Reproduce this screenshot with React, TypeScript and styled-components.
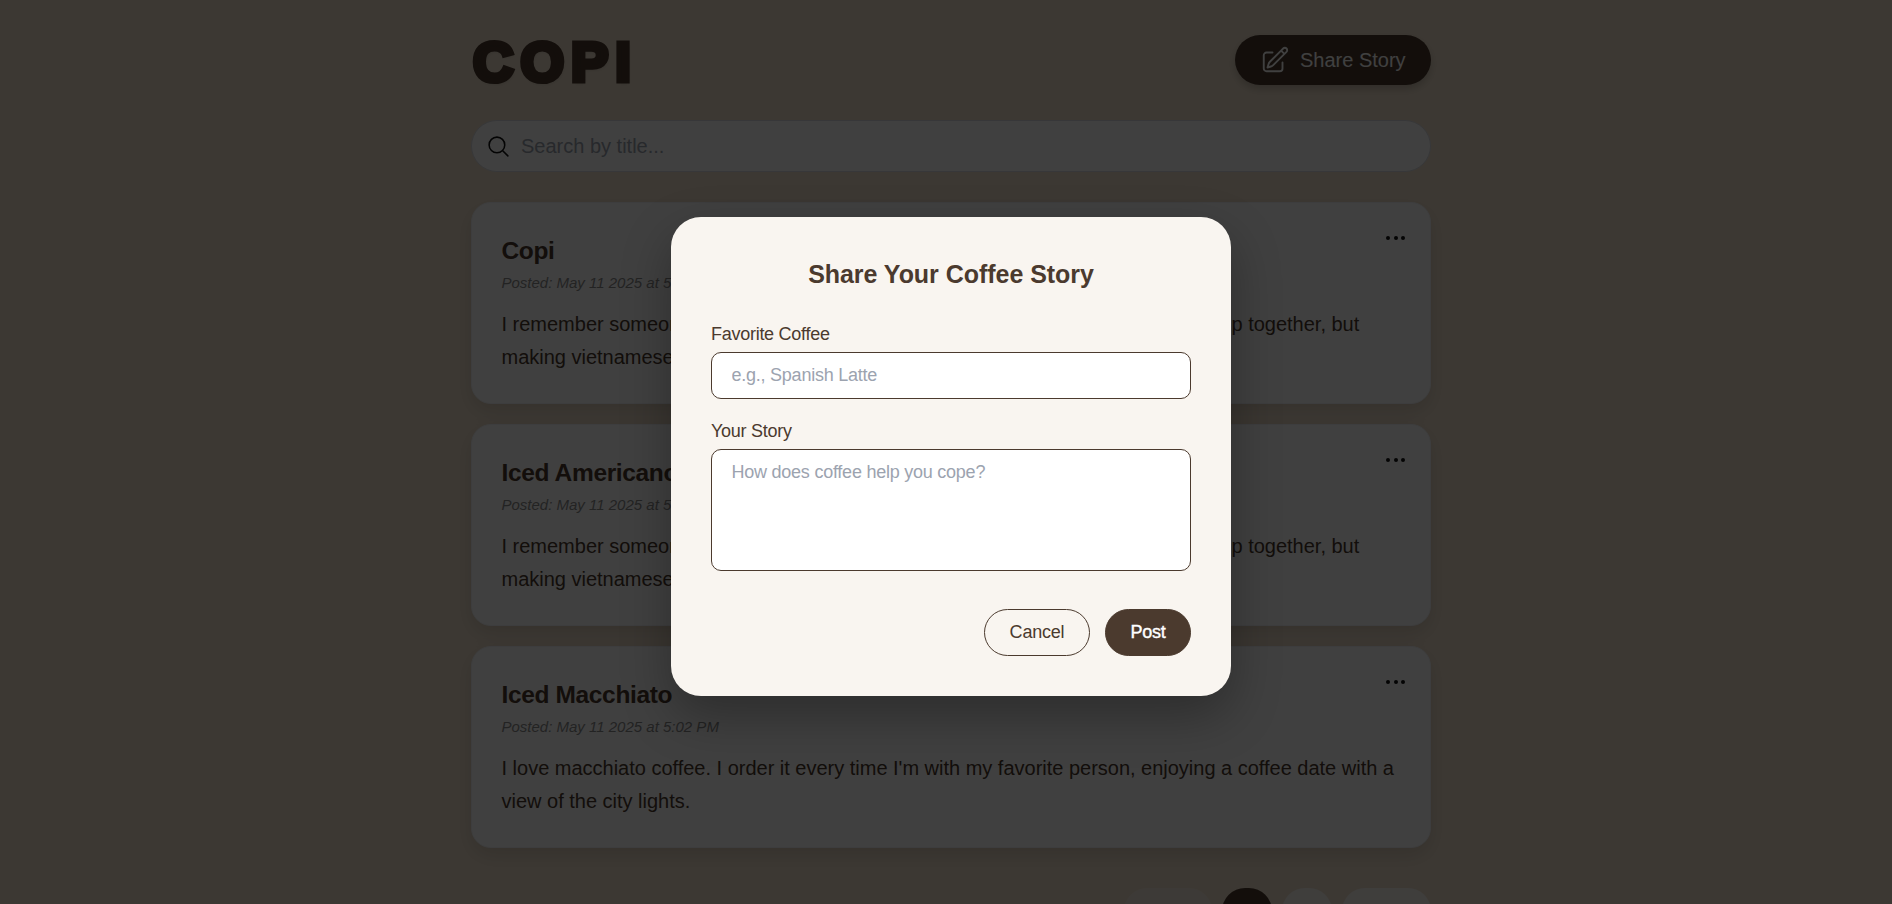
import React from "react";
import styled, { createGlobalStyle, css } from "styled-components";

const brown = "#4b3a2e";

const GlobalStyle = createGlobalStyle`
  * { box-sizing: border-box; }
  html, body { margin: 0; height: 904px; overflow: hidden; background: #f0e0cc; }
  body, input, textarea, button { font-family: "Liberation Sans", Arial, sans-serif; }
`;

const Screen = styled.div`
  position: relative;
  width: 1902px;
  height: 904px;
  overflow: hidden;
  background: #f0e0cc;
`;

const Page = styled.main`
  width: 960px;
  margin: 0 auto;
  padding-top: 35px;
  color: ${brown};
`;

const Header = styled.header`
  display: flex;
  justify-content: space-between;
  height: 50px;
  margin-bottom: 35px;
`;

const Brand = styled.h1`
  margin: 0;
  padding-left: 2px;
  font-size: 56px;
  line-height: 53px;
  font-weight: 700;
  letter-spacing: 7px;
  -webkit-text-stroke: 5.2px ${brown};
  text-shadow: 1px 2px 4px rgba(0, 0, 0, 0.2);
`;

const ShareButton = styled.button`
  display: flex;
  align-items: center;
  gap: 10px;
  width: 196px;
  padding: 0 0 0 25px;
  border: 0;
  border-radius: 25px;
  background: ${brown};
  color: #fff;
  font-size: 20px;
  box-shadow: 0 4px 8px rgba(0, 0, 0, 0.2);
`;

const SearchBar = styled.label`
  display: flex;
  align-items: center;
  gap: 10px;
  height: 52px;
  margin-bottom: 30px;
  padding-left: 14px;
  border: 1px solid #d9dce2;
  border-radius: 26px;
  background: #fff;
`;

const SearchInput = styled.input`
  flex: 1;
  padding: 0;
  border: 0;
  outline: 0;
  background: transparent;
  font-size: 20px;
  &::placeholder { color: #9ca3af; }
`;

const CardList = styled.section`
  display: flex;
  flex-direction: column;
  gap: 20px;
`;

const Card = styled.article`
  display: grid;
  grid-template-columns: 1fr auto;
  align-content: start;
  height: 202px;
  padding: 30px 25px 0 29.5px;
  border: 1px solid #f3f4f6;
  border-radius: 20px;
  background: #fff;
  box-shadow: 0 8px 20px rgba(0, 0, 0, 0.12);
`;

const CardTitle = styled.h2`
  margin: 0;
  font-size: 24.5px;
  line-height: 36px;
  font-weight: 700;
  letter-spacing: -0.36px;
`;

const MenuDots = styled.div`
  display: flex;
  gap: 3.5px;
  padding-top: 3px;
  i { width: 4px; height: 4px; border-radius: 50%; background: #111; }
`;

const Posted = styled.p`
  grid-column: 1 / -1;
  margin: 0;
  font-size: 15px;
  line-height: 28px;
  font-style: italic;
  color: #8d8d8d;
`;

const Body = styled.p`
  grid-column: 1 / -1;
  margin: 11px 0 0;
  font-size: 20px;
  line-height: 33px;
  letter-spacing: -0.01px;
`;

const Pagination = styled.nav`
  display: flex;
  justify-content: flex-end;
  gap: 10px;
  margin-top: 40px;
`;

const PageButton = styled.button<{ $width: number; $tone?: "active" | "muted" }>`
  width: ${(p) => p.$width}px;
  height: 46px;
  padding: 0;
  border: 0;
  border-radius: 23px;
  font-size: 20px;
  color: ${(p) => (p.$tone === "active" ? "#fff" : brown)};
  background: ${(p) => (p.$tone === "active" ? brown : "#f9f5f0")};
  opacity: ${(p) => (p.$tone === "muted" ? 0.4 : 1)};
`;

const Overlay = styled.div`
  position: absolute;
  inset: 0 0 -9px;
  display: flex;
  align-items: center;
  justify-content: center;
  background: rgba(0, 0, 0, 0.75);
`;

const Dialog = styled.form`
  width: 560px;
  height: 479px;
  padding: 40px;
  border-radius: 30px;
  background: #f9f5f0;
  color: ${brown};
  box-shadow: 0 20px 50px rgba(0, 0, 0, 0.3);
`;

const DialogTitle = styled.h2`
  margin: 0 0 27px;
  font-size: 25px;
  line-height: 34px;
  font-weight: 700;
  letter-spacing: -0.04px;
  text-align: center;
`;

const FieldLabel = styled.label`
  display: block;
  height: 34px;
  font-size: 18px;
  line-height: 33px;
  letter-spacing: -0.27px;
`;

const fieldStyle = css`
  display: block;
  width: 100%;
  border: 1px solid ${brown};
  border-radius: 10px;
  outline: 0;
  background: #fff;
  font-size: 18px;
  letter-spacing: -0.24px;
  &::placeholder { color: #9ca3af; }
`;

const TextField = styled.input`
  ${fieldStyle}
  height: 47px;
  margin-bottom: 16px;
  padding: 0 19.5px;
`;

const StoryField = styled.textarea`
  ${fieldStyle}
  height: 122px;
  padding: 12px 19.5px;
  resize: none;
`;

const Actions = styled.div`
  display: flex;
  justify-content: flex-end;
  gap: 15px;
  margin-top: 38px;
`;

const ActionButton = styled.button<{ $primary?: boolean }>`
  width: ${(p) => (p.$primary ? 86 : 106)}px;
  height: 47px;
  padding: 0;
  border: 1px solid ${brown};
  border-radius: 24px;
  background: ${(p) => (p.$primary ? brown : "transparent")};
  color: ${(p) => (p.$primary ? "#fff" : brown)};
  font-size: 18px;
  letter-spacing: -0.2px;
  -webkit-text-stroke: ${(p) => (p.$primary ? "0.4px #fff" : "0")};
`;

const stories = [
  { title: "Copi", time: "5:05", body: "I remember someone who loves coffee too. We never had the chance to have a cup together, but making vietnamese coffee reminds me of them." },
  { title: "Iced Americano", time: "5:04", body: "I remember someone who loves coffee too. We never had the chance to have a cup together, but making vietnamese coffee reminds me of them." },
  { title: "Iced Macchiato", time: "5:02", body: "I love macchiato coffee. I order it every time I'm with my favorite person, enjoying a coffee date with a view of the city lights." },
];

const EditIcon = () => (
  <svg width="30" height="30" viewBox="0 0 24 24" fill="none" stroke="currentColor" strokeWidth="1.5" strokeLinecap="round" strokeLinejoin="round">
    <path d="m16.862 4.487 1.687-1.688a1.875 1.875 0 1 1 2.652 2.652L10.582 16.07a4.5 4.5 0 0 1-1.897 1.13L6 18l.8-2.685a4.5 4.5 0 0 1 1.13-1.897l8.932-8.931Zm0 0L19.5 7.125M18 14v4.75A2.25 2.25 0 0 1 15.75 21H5.25A2.25 2.25 0 0 1 3 18.75V8.25A2.25 2.25 0 0 1 5.25 6H10" />
  </svg>
);

const SearchIcon = () => (
  <svg width="25" height="25" viewBox="0 0 24 24" fill="none" stroke="#111" strokeWidth="1.5" strokeLinecap="round" strokeLinejoin="round">
    <path d="m21 21-5.197-5.197m0 0A7.5 7.5 0 1 0 5.196 5.196a7.5 7.5 0 0 0 10.607 10.607Z" />
  </svg>
);

export default function App() {
  return (
    <Screen>
      <GlobalStyle />
      <Page>
        <Header>
          <Brand>COPI</Brand>
          <ShareButton><EditIcon />Share Story</ShareButton>
        </Header>
        <SearchBar>
          <SearchIcon />
          <SearchInput placeholder="Search by title..." />
        </SearchBar>
        <CardList>
          {stories.map((s) => (
            <Card key={s.title}>
              <CardTitle>{s.title}</CardTitle>
              <MenuDots><i /><i /><i /></MenuDots>
              <Posted>Posted: May 11 2025 at {s.time} PM</Posted>
              <Body>{s.body}</Body>
            </Card>
          ))}
        </CardList>
        <Pagination>
          <PageButton $width={88} $tone="muted">« Prev</PageButton>
          <PageButton $width={50} $tone="active">1</PageButton>
          <PageButton $width={50}>2</PageButton>
          <PageButton $width={89}>Next »</PageButton>
        </Pagination>
      </Page>
      <Overlay>
        <Dialog>
          <DialogTitle>Share Your Coffee Story</DialogTitle>
          <FieldLabel htmlFor="coffee">Favorite Coffee</FieldLabel>
          <TextField id="coffee" placeholder="e.g., Spanish Latte" />
          <FieldLabel htmlFor="story">Your Story</FieldLabel>
          <StoryField id="story" placeholder="How does coffee help you cope?" />
          <Actions>
            <ActionButton type="button">Cancel</ActionButton>
            <ActionButton type="button" $primary>Post</ActionButton>
          </Actions>
        </Dialog>
      </Overlay>
    </Screen>
  );
}
